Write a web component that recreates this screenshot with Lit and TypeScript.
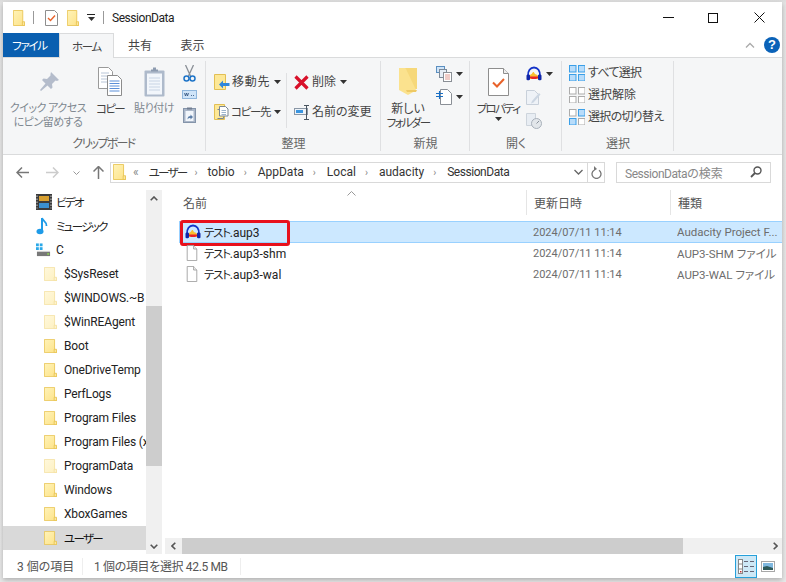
import { LitElement, html, css, svg } from "lit";
import { customElement } from "lit/decorators.js";

const folder = (w = 16, h = 17, pale = false) => svg`<svg class="ic" width=${w} height=${h} viewBox="0 0 16 17" preserveAspectRatio="none">
  <defs><linearGradient id=${pale ? "fp" : "fg"} x1="0" y1="0" x2="1" y2="1"><stop offset="0" stop-color=${pale ? "#fff8dc" : "#fff3b8"}/><stop offset="1" stop-color=${pale ? "#fdf0c0" : "#fde287"}/></linearGradient></defs>
  <path d="M.5.5h12.5v13h2.500v3H.5z" fill=${`url(#${pale ? "fp" : "fg"})`} stroke=${pale ? "#f4e0a0" : "#e8c350"}/>
  <path d="M12.500 12.500h3v4h-3z" fill=${pale ? "#fdf3cf" : "#fbe7a0"} stroke=${pale ? "#f4e0a0" : "#e8c350"}/></svg>`;

const audacity = (s = 16) => svg`<svg class="ic" width=${s} height=${s} viewBox="0 0 16 16">
  <path d="M4 9c1-1 1.500-.5 2-1.500s1.500-2 2-1 1.500 2 2 2 1 .5 2 1V13H4z" fill="#f9c030"/>
  <path d="M4 10.500h8V12l-2 1H6l-2-1z" fill="#e8222a"/>
  <path d="M2 10.500C1.500 4.500 4.500 1.500 8 1.500s6.500 3 6 9" fill="none" stroke="#1433c8" stroke-width="1.800"/>
  <path d="M.5 9.500c0-1.200 3.200-1.700 3.500 0v3.800c-.3 1.500-3.500 1.200-3.500 0zM15.500 9.500c0-1.200-3.200-1.700-3.500 0v3.800c.3 1.500 3.500 1.200 3.500 0z" fill="#1026a8"/></svg>`;

const doc = (s = 15, h = 18) => svg`<svg class="ic" width=${s} height=${h} viewBox="0 0 15 18" preserveAspectRatio="none"><path d="M1.500.5h8l4 4v13h-12z" fill="#fff" stroke="#9a9a9a"/><path d="M9.500.5v4h4" fill="#eee" stroke="#9a9a9a"/></svg>`;

const caret = svg`<svg class="caret" width="7" height="4" viewBox="0 0 7 4"><path d="M0 0h7L3.500 4z" fill="#333"/></svg>`;

const selGrid = (fills: string[]) => svg`<svg class="ic" width="16" height="16" viewBox="0 0 16 16">
  ${[[0, 0], [9, 0], [0, 9], [9, 9]].map(([x, y], i) => svg`<rect x=${x + 0.5} y=${y + 0.5} width="6.500" height="6.500" fill=${fills[i] === "g" ? "#fff" : "#b8dcfa"} stroke=${fills[i] === "g" ? "#ababab" : "#3a9fe8"}/>`)}</svg>`;

const navItems: [string, boolean][] = [
  ["$SysReset", true], ["$WINDOWS.~B", true], ["$WinREAgent", true], ["Boot", false], ["OneDriveTemp", false],
  ["PerfLogs", false], ["Program Files", false], ["Program Files (x", false], ["ProgramData", true], ["Windows", false], ["XboxGames", false],
];

@customElement("app-root")
export class AppRoot extends LitElement {
  static styles = css`
    :host { display: block; width: 786px; height: 582px; overflow: hidden; background: #fff;
      font-family: Roboto, "Noto Sans CJK JP", sans-serif; font-size: 12px; color: #333; font-feature-settings: "palt"; }
    * { box-sizing: border-box; }
    .ic { display: block; flex: none; }
    .k { font-size: 11.500px; letter-spacing: -1.700px; }
    .k2 { font-size: 11.500px; letter-spacing: -1.300px; }
    .k3 { font-size: 11px; letter-spacing: -.500px; }
    .sd { letter-spacing: -.450px; }
    .stage { width: 786px; height: 582px; padding: 2px 4px 4px 3px; background: linear-gradient(#dcdcdc, #e4e4e4 3px, #e8e8e8); }
    .win { width: 779px; height: 576px; background: #fff; display: flex; flex-direction: column; box-shadow: 0 2px 5px rgba(0,0,0,.25); }

    .title { height: 31px; flex: none; display: flex; align-items: center; padding-left: 10px; }
    .title .sep { width: 1px; height: 13px; background: #999; margin: 0 8px; }
    .title .name { font-size: 12px; color: #222; }
    .qdown { margin-left: 8px; width: 8px; display: flex; flex-direction: column; gap: 2px; align-items: center; }
    .qdown i { width: 8px; height: 1px; background: #222; }
    .winbtns { margin-left: auto; display: flex; align-items: center; padding-right: 17px; }

    .tabs { height: 24px; flex: none; display: flex; align-items: stretch; position: relative; }
    .tab { width: 53px; display: flex; align-items: center; justify-content: center; color: #444; font-size: 12px; padding-bottom: 1px; }
    .tab.file { width: 56px; background: #0a5fb0; color: #fff; height: 24px; padding-right: 3px; }
    .tab.home { background: #f5f6f7; border: 1px solid #dadbdc; border-bottom: 0; width: 55px; position: relative; z-index: 1; height: 25px; }
    .tab.share { width: 52px; }
    .tabright { margin-left: auto; display: flex; align-items: center; gap: 9px; padding-right: 2px; padding-bottom: 1px; }
    .help { width: 16px; height: 16px; border-radius: 50%; background: #0a62b8; color: #fff; font: bold 13px/16px "Liberation Sans", sans-serif; text-align: center; }

    .ribbon { height: 98px; flex: none; display: flex; background: #f5f6f7; border-top: 1px solid #dadbdc; border-bottom: 1px solid #dadbdc; }
    .group { display: flex; flex-direction: column; padding-top: 3px; position: relative; }
    .group::after { content: ""; position: absolute; right: 0; top: 3px; bottom: 3px; width: 1px; background: #dfe0e2; }
    .gbody { height: 76px; display: flex; }
    .glabel { text-align: center; color: #666; font-size: 12px; line-height: 14px; }
    .g1 { width: 203px; } .g2 { width: 175px; } .g3 { width: 89px; } .g4 { width: 92px; } .g5 { width: 112px; }
    .big { display: flex; flex-direction: column; align-items: center; line-height: 14px; text-align: center; white-space: nowrap; color: #444; }
    .big .iconbox { height: 41px; display: flex; align-items: center; justify-content: center; flex: none; }
    .dis { color: #808890; }
    .col { display: flex; flex-direction: column; align-items: center; }
    .rowbtn { display: flex; align-items: center; white-space: nowrap; color: #444; line-height: 14px; }
    .g1 .big.pin { width: 80px; margin-left: 5px; }
    .g1 .big.copy { width: 36px; margin-left: 4px; }
    .g1 .big.paste { width: 48px; margin-left: 2px; }
    .g1 .col { width: 16px; margin-left: 3px; padding-top: 4px; gap: 8px; }
    .g2 .gbody { padding: 13px 0 0 8px; }
    .g2 .c { display: flex; flex-direction: column; gap: 14px; }
    .g2 .c1 { width: 72px; gap: 14px; }
    .g2 .v { width: 1px; height: 55px; background: #dfe0e2; margin: -1px 7px 0 0; }
    .g2 .rowbtn .ic { margin-right: 2px; }
    .g2 .rowbtn { height: 16px; }
    .g2 .rowbtn .caret { margin-left: 4px; margin-right: 0; }
    .wide { letter-spacing: .8px; }
    .g3 .big { width: 52px; margin-left: 1px; }
    .g3 .col { margin-left: 2px; padding-top: 5px; gap: 7px; align-items: flex-start; }
    .sm { display: flex; align-items: center; gap: 4px; }
    .g4 .big { width: 52px; margin-left: 2px; }
    .g4 .col { margin-left: 2px; padding-top: 5px; gap: 8px; align-items: flex-start; }
    .cb { display: flex; margin-top: 1px; }
    .g5 .gbody { flex-direction: column; padding: 4px 0 0 7px; gap: 6px; }
    .g5 .rowbtn { height: 16px; gap: 3px; }
    .tight { letter-spacing: -.7px; }

    .addr { height: 35px; flex: none; display: flex; align-items: center; padding: 7px 12px 7px 0; }
    .navbtns { width: 107px; display: flex; align-items: center; padding-left: 13px; flex: none; }
    .crumb { width: 478px; height: 21px; border: 1px solid #d9d9d9; display: flex; align-items: center; padding: 0 0 1px 2px; flex: none; color: #333; }
    .crumb .arr { margin: 0 9px; width: 5px; color: #888; font-size: 10px; }
    .crumb .arr.first { margin: 0 8px; }
    .crumb .end { margin-left: auto; padding-right: 4px; }
    .refresh { width: 17px; height: 21px; border: 1px solid #d9d9d9; border-left: 0; display: flex; align-items: center; justify-content: center; flex: none; }
    .search { margin-left: 11px; width: 155px; height: 21px; border: 1px solid #d9d9d9; display: flex; align-items: center; justify-content: space-between; padding: 0 8px 1px; color: #888; flex: none; }

    .main { flex: 1; min-height: 0; display: flex; }
    .nav { width: 143px; flex: none; overflow: hidden; }
    .nrow { height: 24px; display: flex; align-items: center; white-space: nowrap; color: #222; overflow: hidden; }
    .nrow.sub { padding-left: 41px; gap: 7px; letter-spacing: -.150px; }
    .nrow.top { padding-left: 33px; gap: 4px; }
    .nrow.sel { background: #d9d9d9; color: #111; }
    .vbar { width: 16px; flex: none; background: #f0f0f0; display: flex; flex-direction: column; align-items: center; padding-top: 6px; }
    .vbar .thumb { width: 16px; height: 160px; background: #cdcdcd; margin-top: 105px; }
    .vbar .dn { margin-top: auto; margin-bottom: 5px; }
    .list { flex: 1; min-width: 0; margin-left: 3px; display: flex; flex-direction: column; position: relative; }
    .head { height: 31px; flex: none; display: flex; color: #555; position: relative; }
    .hc { height: 25px; display: flex; align-items: center; padding-left: 7px; border-right: 1px solid #e5e5e5; }
    .hc.n { width: 362px; padding-left: 18px; }
    .hc.d { width: 144px; }
    .hc.t { border: 0; }
    .sort { position: absolute; left: 182px; top: 1px; }
    .rows { flex: 1; padding-left: 14px; }
    .r { display: flex; height: 21px; align-items: center; white-space: nowrap; position: relative; padding-bottom: 2px; }
    .r.sel { height: 22px; background: #cce8ff; border: 1px solid #99d1ff; border-right: 0; padding-bottom: 1px; }
    .r .nm { width: 354px; display: flex; align-items: center; gap: 6px; padding-left: 7px; color: #222; }
    .r.sel .nm { padding-left: 5px; width: 353px; gap: 3px; }
    .r .dt { width: 144px; color: #6d6d6d; font-size: 11px; padding-top: 2px; }
    .r .ty { color: #6d6d6d; font-size: 11.500px; overflow: hidden; }
    .mark { position: absolute; left: 0; top: -2px; width: 110px; height: 26px; border: 3px solid #e8111c; border-radius: 3px; }
    .hbar { height: 16px; flex: none; background: #f0f0f0; display: flex; align-items: center; }
    .hbar .l { width: 17px; display: flex; justify-content: center; }
    .hbar .thumb { width: 501px; height: 16px; background: #cdcdcd; }
    .hbar .r2 { margin-left: auto; padding-right: 4px; }

    .status { height: 24px; flex: none; display: flex; align-items: center; color: #555; padding-left: 14px; position: relative; }
    .status .s1 { width: 65px; padding-bottom: 1px; }
    .status .s2 { margin-left: 11px; width: 146px; letter-spacing: -.35px; padding-bottom: 1px; }
    .status .bar { width: 1px; height: 17px; background: #eee; }
    .views { margin-left: auto; display: flex; align-items: center; padding-right: 7px; gap: 4px; }
    .vsel { width: 22px; height: 23px; background: #cde8f6; border: 1px solid #26a0da; display: flex; align-items: center; justify-content: center; }
  `;

  render() {
    return html`<div class="stage"><div class="win">
      <div class="title">
        ${folder(12, 16)}
        <div class="sep"></div>
        <svg class="ic" width="13" height="16" viewBox="0 0 13 16" style="margin-left:3px"><path d="M.5.5h9l3 3v12H.5z" fill="#fff" stroke="#8e8e8e"/><path d="M3 8l2.500 2.500L10 5.500" fill="none" stroke="#e8622a" stroke-width="1.400"/></svg>
        <div style="width:9px"></div>
        ${folder(12, 16)}
        <div class="qdown"><i></i>${caret}</div>
        <div class="sep"></div>
        <div class="name sd">SessionData</div>
        <div class="winbtns">
          <svg class="ic" width="11" height="11" viewBox="0 0 11 11"><path d="M0 5.500h11" stroke="#111"/></svg>
          <svg class="ic" width="10" height="10" viewBox="0 0 10 10" style="margin-left:34px"><rect x=".5" y=".5" width="9" height="9" fill="none" stroke="#111"/></svg>
          <svg class="ic" width="11" height="11" viewBox="0 0 11 11" style="margin-left:36px"><path d="M.5.5l10 10M10.500.5l-10 10" stroke="#111"/></svg>
        </div>
      </div>

      <div class="tabs">
        <div class="tab file"><span class="k2">ファイル</span></div>
        <div class="tab home"><span class="k2">ホーム</span></div>
        <div class="tab share">共有</div>
        <div class="tab">表示</div>
        <div class="tabright">
          <svg class="ic" width="10" height="6" viewBox="0 0 10 6"><path d="M1 5.500l4-4 4 4" fill="none" stroke="#aaa" stroke-width="1.300"/></svg>
          <div class="help">?</div>
        </div>
      </div>

      <div class="ribbon">
        <div class="group g1">
          <div class="gbody">
            <div class="big pin dis">
              <div class="iconbox"><svg class="ic" width="22" height="22" viewBox="0 0 22 22" style="margin-left:2px"><path d="M13 1l8 8-2 1-1.500-.5-3.500 3.500.5 3.500-1.500 1.500-3.500-3.500L3 20l-1-1 5.500-6.500L4 9l1.500-1.500L9 8l3.500-3.500L12.500 3z" fill="#b4bccb"/></svg></div>
              <div class="k3">クイック アクセス<br>にピン留めする</div>
            </div>
            <div class="big copy">
              <div class="iconbox"><svg class="ic" width="24" height="29" viewBox="0 0 24 29"><path d="M.5.500h10l4 4v17H.500z" fill="#fff" stroke="#9a9a9a"/><path d="M3 6h8M3 9h9M3 12h9M3 15h9" stroke="#b9c6d8"/><path d="M9.500 8.500h10l4 4v16h-14z" fill="#fff" stroke="#8c8c8c"/><path d="M11.500 14h10M11.500 16.500h10M11.500 19h10M11.500 21.500h10M11.500 24h10" stroke="#5b8fd8"/></svg></div>
              <div class="k">コピー</div>
            </div>
            <div class="big paste dis">
              <div class="iconbox"><svg class="ic" width="21" height="30" viewBox="0 0 21 30"><rect x=".5" y="3.500" width="20" height="26" rx="1" fill="#aebacb"/><rect x="3" y="6.500" width="15" height="21" fill="#f2f6fb"/><path d="M5 11h11M5 14h11M5 17h11M5 20h11M5 23h11" stroke="#c8d4e4"/><path d="M7 4.500h7V2.500h-2V.500H9v2H7z" fill="#8d9bb0"/></svg></div>
              <div class="k3">貼り付け</div>
            </div>
            <div class="col">
              <svg class="ic" width="13" height="17" viewBox="0 0 13 17"><path d="M2.500 0l5 11M10.500 0l-5 11" stroke="#8a8f96" stroke-width="1.300"/><circle cx="3.500" cy="13.500" r="2.500" fill="none" stroke="#1e74c8" stroke-width="1.500"/><circle cx="9.500" cy="13.500" r="2.500" fill="none" stroke="#1e74c8" stroke-width="1.500"/></svg>
              <svg class="ic" width="15" height="9" viewBox="0 0 15 9"><rect x=".5" y=".5" width="14" height="8" fill="#cfe4f8" stroke="#8fb6dc"/><path d="M2.500 3l1 3 1-3 1 3 1-3M9 5.500h1M11 5.500h1" stroke="#2c4e7a" fill="none" stroke-width=".8"/></svg>
              <svg class="ic" width="13" height="16" viewBox="0 0 13 16"><rect x=".5" y="1.500" width="12" height="14" fill="#aab6c8" stroke="#8494aa"/><rect x="2.500" y="4" width="8" height="10" fill="#f2f6fb"/><path d="M4 .5h5v2H4z" fill="#707d90"/><path d="M4.500 12.500c0-2.500 1-3.500 3-3.500V7.500l2.500 2.500-2.500 2.500V11c-1.500 0-2.200.4-3 1.500z" fill="#5c7ea8"/></svg>
            </div>
          </div>
          <div class="glabel k" style="padding-right:2px">クリップボード</div>
        </div>

        <div class="group g2">
          <div class="gbody">
            <div class="c c1">
              <div class="rowbtn">
                <svg class="ic" width="16" height="16" viewBox="0 0 16 16"><path d="M.5.5h11v15H.5z" fill="#fde897" stroke="#e2bf54"/><path d="M15.500 9H9V6.500L5 10.500l4 4V12h6.500z" fill="#2f86dc"/></svg>
                <span class="wide">移動先</span>${caret}
              </div>
              <div class="rowbtn">
                <svg class="ic" width="15" height="16" viewBox="0 0 15 16"><path d="M.5.5h10v15H.5z" fill="#fde897" stroke="#e2bf54"/><path d="M5.500 2.500h6l2.500 2.500v7h-8.500z" fill="#fff" stroke="#7a8794"/><path d="M3.500 5.500h2M3.500 14.500h6v-2" fill="none" stroke="#7a8794"/><path d="M7.500 6.500h4.500M7.500 8.500h4.500M7.500 10.500h4.500" stroke="#9cb4cc"/></svg>
                <span class="k2">コピー先</span>${caret}
              </div>
            </div>
            <div class="v"></div>
            <div class="c">
              <div class="rowbtn">
                <svg class="ic" width="15" height="15" viewBox="0 0 15 15" style="margin-right:3px"><path d="M1.500 1.500l12 12M13.500 1.500l-12 12" stroke="#d8102a" stroke-width="3.200"/></svg>
                <span>削除</span>${caret}
              </div>
              <div class="rowbtn">
                <svg class="ic" width="17" height="15" viewBox="0 0 17 15" style="margin-right:1px"><rect x=".5" y="3.500" width="13" height="6" fill="#eef3f8" stroke="#8a97a6"/><rect x="2" y="5" width="7" height="3" fill="#3a95e0"/><path d="M10 .5h5M10 14.500h5M12.500 .5v14" stroke="#4a5560" fill="none"/></svg>
                <span>名前の変更</span>
              </div>
            </div>
          </div>
          <div class="glabel">整理</div>
        </div>

        <div class="group g3">
          <div class="gbody">
            <div class="big">
              <div class="iconbox"><svg class="ic" width="19" height="29" viewBox="0 0 19 29"><path d="M6 1h12v21H7z" fill="#f6d87a"/><path d="M0 1h6l1 1 10 21-1 1-7 4-9-5z" fill="#fbe28e"/><path d="M7 23h11l-1 2H8z" fill="#eec965"/></svg></div>
              <div>新しい<br><span class="k">フォルダー</span></div>
            </div>
            <div class="col">
              <div class="sm"><svg class="ic" width="16" height="16" viewBox="0 0 16 16"><rect x=".5" y=".5" width="8" height="6" fill="#cfe4f8" stroke="#5b8fc0"/><rect x="3.500" y="3.500" width="7" height="8" fill="#e6eef6" stroke="#7d8a98"/><rect x="7.500" y="6.500" width="8" height="9" fill="#fff" stroke="#8a8f96"/><path d="M9 9h5M9 11h5M9 13h5" stroke="#e09a90"/></svg>${caret}</div>
              <div class="sm"><svg class="ic" width="16" height="16" viewBox="0 0 16 16"><path d="M4.500.5h7l4 4v11h-11z" fill="#fff" stroke="#8a8f96"/><path d="M0 4.500h7M0 7.500h7M3.500 2v8" stroke="#1a6fc4" stroke-width="1.100"/></svg>${caret}</div>
            </div>
          </div>
          <div class="glabel">新規</div>
        </div>

        <div class="group g4">
          <div class="gbody">
            <div class="big">
              <div class="iconbox"><svg class="ic" width="21" height="28" viewBox="0 0 21 28"><path d="M.5.500h15l5 5v22H.500z" fill="#fff" stroke="#8e8e8e"/><path d="M15.500.5v5h5" fill="#eee" stroke="#8e8e8e"/><path d="M5 14.500l4 4 7-7.500" fill="none" stroke="#e8622a" stroke-width="2"/></svg></div>
              <div class="k">プロパティ</div>
              <div class="cb">${caret}</div>
            </div>
            <div class="col">
              <div class="sm" style="gap:4px">${audacity(16)}${caret}</div>
              <svg class="ic" width="15" height="15" viewBox="0 0 15 15"><path d="M.5.5h8l4 4v10H.500z" fill="#eef2f7" stroke="#c8d0da"/><path d="M6 11l7-8 1.500 1.500-7 8L5 13.500z" fill="#ccd6e2"/></svg>
              <svg class="ic" width="16" height="16" viewBox="0 0 16 16"><path d="M.5.5h9v12H.5z" fill="#e8edf3" stroke="#cdd4dc"/><circle cx="10.500" cy="10.500" r="5" fill="#e2e6ea" stroke="#a8b0ba"/><path d="M10.500 10.500l2.500-2.500" stroke="#8a929c"/></svg>
            </div>
          </div>
          <div class="glabel">開く</div>
        </div>

        <div class="group g5">
          <div class="gbody">
            <div class="rowbtn">${selGrid(["b", "b", "b", "b"])}<span class="tight">すべて選択</span></div>
            <div class="rowbtn">${selGrid(["g", "g", "g", "g"])}<span>選択解除</span></div>
            <div class="rowbtn">${selGrid(["g", "b", "b", "g"])}<span class="tight">選択の切り替え</span></div>
          </div>
          <div class="glabel">選択</div>
        </div>
      </div>

      <div class="addr">
        <div class="navbtns">
          <svg class="ic" width="13" height="11" viewBox="0 0 13 11"><path d="M6 .5L1 5.500l5 5M1 5.500h12" fill="none" stroke="#777" stroke-width="1.500"/></svg>
          <svg class="ic" width="13" height="11" viewBox="0 0 13 11" style="margin-left:17px"><path d="M7 .5l5 5-5 5M12 5.500H0" fill="none" stroke="#ccc" stroke-width="1.500"/></svg>
          <svg class="ic" width="7" height="4" viewBox="0 0 7 4" style="margin-left:14px"><path d="M.5.500l3 3 3-3" fill="none" stroke="#999"/></svg>
          <svg class="ic" width="11" height="13" viewBox="0 0 11 13" style="margin-left:13px"><path d="M.5 5.500l5-5 5 5M5.500 .5v12.500" fill="none" stroke="#777" stroke-width="1.500"/></svg>
        </div>
        <div class="crumb">
          ${folder(13, 16)}
          <span style="margin-left:7px;color:#888">«</span>
          <span class="k" style="margin-left:10px">ユーザー</span>
          <span class="arr first">›</span><span>tobio</span>
          <span class="arr">›</span><span>AppData</span>
          <span class="arr">›</span><span>Local</span>
          <span class="arr">›</span><span>audacity</span>
          <span class="arr">›</span><span class="sd">SessionData</span>
          <svg class="end" width="13" height="6" viewBox="0 0 9 6"><path d="M.5 1l4 4 4-4" fill="none" stroke="#666" stroke-width="1.300"/></svg>
        </div>
        <div class="refresh"><svg class="ic" width="11" height="13" viewBox="0 0 11 13"><path d="M3 3.200A4.500 4.500 0 1 0 8 3.200" fill="none" stroke="#777" stroke-width="1.300" transform="translate(0 1)"/><path d="M3 0l3 3-3 2z" fill="#777"/></svg></div>
        <div class="search"><span><span class="sd">SessionData</span>の検索</span><svg class="ic" width="12" height="12" viewBox="0 0 12 12"><circle cx="7.500" cy="4.500" r="3.500" fill="none" stroke="#555" stroke-width="1.400"/><path d="M5 7L1 11" stroke="#555" stroke-width="1.800"/></svg></div>
      </div>

      <div class="main">
        <div class="nav">
          <div class="nrow top"><svg class="ic" width="16" height="16" viewBox="0 0 16 16"><rect x="0" y="0" width="16" height="16" fill="#3b3b3b"/><rect x="3" y="2" width="10" height="5" fill="#d8a030"/><rect x="3" y="9" width="10" height="5" fill="#3a90d0"/><path d="M1 1.500v13M15 1.500v13" stroke="#ccc" stroke-dasharray="1.500 1.500"/></svg><span class="k">ビデオ</span></div>
          <div class="nrow top"><svg class="ic" width="16" height="18" viewBox="0 0 16 18"><path d="M6 1v12.500" stroke="#1e9be8" stroke-width="2"/><ellipse cx="4" cy="14.500" rx="3.500" ry="2.800" fill="#1e9be8"/><path d="M6 1c.5 3 5 3.500 4.500 8" fill="none" stroke="#1e9be8" stroke-width="1.800"/></svg><span class="k">ミュージック</span></div>
          <div class="nrow top" style="gap:5px"><svg class="ic" width="15" height="14" viewBox="0 0 16 14"><rect x="0" y="0" width="3" height="3" fill="#2aa8e8"/><rect x="4" y="0" width="3" height="3" fill="#2aa8e8"/><rect x="0" y="4" width="3" height="3" fill="#2aa8e8"/><rect x="4" y="4" width="3" height="3" fill="#2aa8e8"/><path d="M1 9h14v4.500H1z" fill="#787878"/><path d="M1 8.500h14" stroke="#c9c9c9"/><rect x="12" y="10.500" width="2" height="1.500" fill="#8ee34c"/></svg><span>C</span></div>
          ${navItems.map(([n, pale]) => html`<div class="nrow sub">${folder(13, 14, pale)}<span>${n}</span></div>`)}
          <div class="nrow sub sel">${folder(13, 14)}<span class="k">ユーザー</span></div>
        </div>
        <div class="vbar">
          <svg class="ic" width="8" height="5" viewBox="0 0 8 5"><path d="M.7 4.300L4 1l3.300 3.300" fill="none" stroke="#555" stroke-width="1.600"/></svg>
          <div class="thumb"></div>
          <svg class="ic dn" width="8" height="5" viewBox="0 0 8 5"><path d="M.7.700L4 4l3.300-3.300" fill="none" stroke="#555" stroke-width="1.600"/></svg>
        </div>
        <div class="list">
          <div class="head">
            <div class="hc n">名前</div>
            <div class="hc d">更新日時</div>
            <div class="hc t">種類</div>
            <svg class="sort" width="9" height="5" viewBox="0 0 9 5"><path d="M.5 4.500l4-4 4 4" fill="none" stroke="#999"/></svg>
          </div>
          <div class="rows">
            <div class="r sel">
              <div class="nm">${audacity(16)}<span><span class="k2">テスト</span>.aup3</span></div>
              <div class="dt">2024/07/11 11:14</div>
              <div class="ty">Audacity Project F...</div>
              <div class="mark"></div>
            </div>
            <div class="r">
              <div class="nm">${doc(12, 16)}<span><span class="k2">テスト</span>.aup3-shm</span></div>
              <div class="dt">2024/07/11 11:14</div>
              <div class="ty">AUP3-SHM ファイル</div>
            </div>
            <div class="r">
              <div class="nm">${doc(12, 16)}<span><span class="k2">テスト</span>.aup3-wal</span></div>
              <div class="dt">2024/07/11 11:14</div>
              <div class="ty">AUP3-WAL ファイル</div>
            </div>
          </div>
          <div class="hbar">
            <div class="l"><svg class="ic" width="5" height="8" viewBox="0 0 5 8"><path d="M4.300.7L1 4l3.300 3.300" fill="none" stroke="#555" stroke-width="1.600"/></svg></div>
            <div class="thumb"></div>
            <div class="r2"><svg class="ic" width="5" height="8" viewBox="0 0 5 8"><path d="M.7.700L4 4 .7 7.300" fill="none" stroke="#555" stroke-width="1.600"/></svg></div>
          </div>
        </div>
      </div>

      <div class="status">
        <div class="s1">3 個の項目</div><div class="bar"></div>
        <div class="s2">1 個の項目を選択 42.5 MB</div><div class="bar"></div>
        <div class="views">
          <div class="vsel"><svg class="ic" width="16" height="15" viewBox="0 0 16 15"><rect x=".5" y=".5" width="4" height="14" fill="#fff" stroke="#888"/><path d="M.5 5h4M.5 10h4" stroke="#888"/><rect x="2" y="12" width="1.500" height="1.500" fill="#b33"/><path d="M6 2.500h4M12 2.500h4M6 7.500h4M12 7.500h4M6 12.500h4M12 12.500h4" stroke="#667"/></svg></div>
          <svg class="ic" width="14" height="11" viewBox="0 0 14 11"><rect x=".5" y=".5" width="13" height="10" fill="#fff" stroke="#a8a8a8"/><rect x="2" y="2" width="10" height="7" fill="#7fb8e0"/><path d="M2 9V6l4-1 6 2v2z" fill="#2e5a5a"/></svg>
        </div>
      </div>
    </div></div>`;
  }
}
